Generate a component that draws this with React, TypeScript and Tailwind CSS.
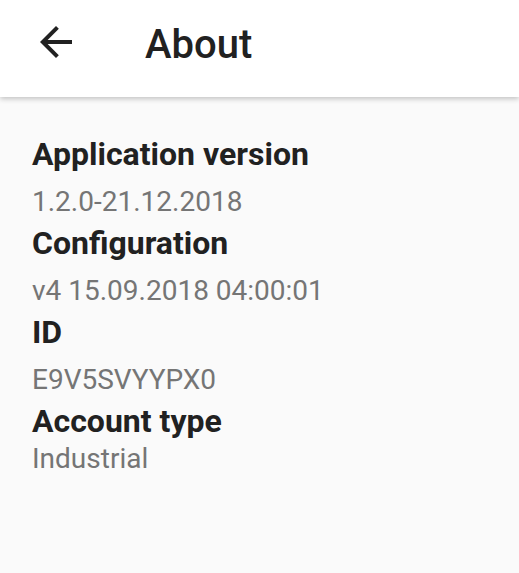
import React from "react";

const items = [
  { label: "Application version", value: "1.2.0-21.12.2018" },
  { label: "Configuration", value: "v4 15.09.2018 04:00:01" },
  { label: "ID", value: "E9V5SVYYPX0" },
  { label: "Account type", value: "Industrial" },
];

export default function App() {
  return (
    <div className="w-[519px] h-[573px] bg-[#fafafa] overflow-hidden font-['Roboto',sans-serif]">
      {/* Toolbar */}
      <div className="relative z-10 h-[97px] bg-white shadow-[0_2px_5px_rgba(0,0,0,0.22)] flex items-start">
        <button className="mt-[18px] ml-[32px] w-[48px] h-[48px]">
          <svg viewBox="0 0 24 24" width="48" height="48" fill="#212121">
            <path d="M20 11H7.83l5.59-5.59L12 4l-8 8 8 8 1.41-1.41L7.83 13H20v-2z" />
          </svg>
        </button>
        <h1 className="ml-[65px] pt-[21px] text-[40px] leading-[47px] font-medium text-[#212121]">
          About
        </h1>
      </div>

      {/* Info list */}
      <div className="px-8 pt-[37px]">
        {items.map((item, i) => (
          <div key={item.label} className="mb-[1px]">
            <div className="text-[32px] leading-[40px] font-bold text-[#212121]">
              {item.label}
            </div>
            <div
              className={
                i === items.length - 1
                  ? "-mt-[2px] text-[28px] leading-[40px] text-[#757575]"
                  : "pt-[8px] text-[28px] leading-[40px] text-[#757575]"
              }
            >
              {item.value}
            </div>
          </div>
        ))}
      </div>
    </div>
  );
}
